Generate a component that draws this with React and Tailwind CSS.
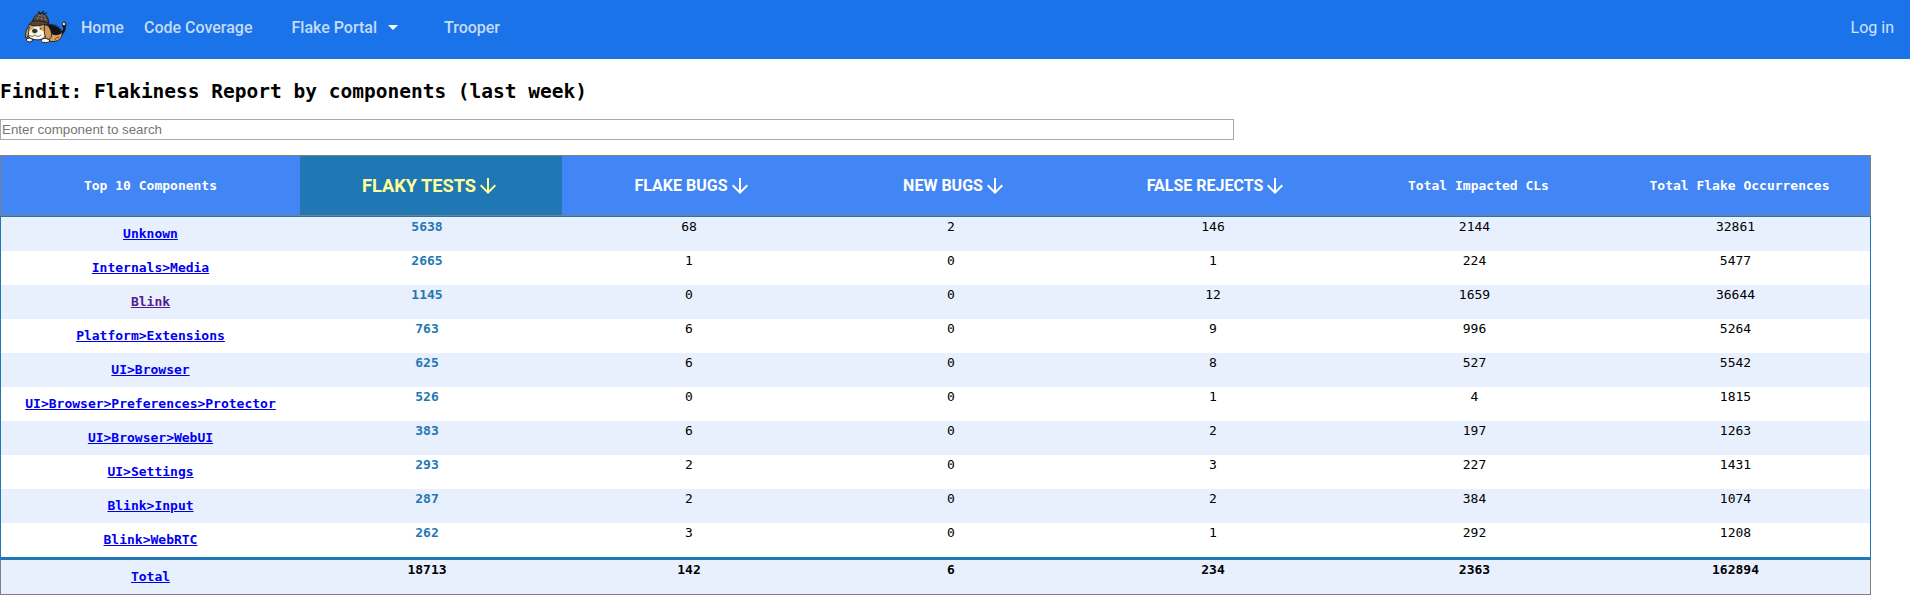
const rows = [
  ['Unknown', 5638, 68, 2, 146, 2144, 32861],
  ['Internals>Media', 2665, 1, 0, 1, 224, 5477],
  ['Blink', 1145, 0, 0, 12, 1659, 36644],
  ['Platform>Extensions', 763, 6, 0, 9, 996, 5264],
  ['UI>Browser', 625, 6, 0, 8, 527, 5542],
  ['UI>Browser>Preferences>Protector', 526, 0, 0, 1, 4, 1815],
  ['UI>Browser>WebUI', 383, 6, 0, 2, 197, 1263],
  ['UI>Settings', 293, 2, 0, 3, 227, 1431],
  ['Blink>Input', 287, 2, 0, 2, 384, 1074],
  ['Blink>WebRTC', 262, 3, 0, 1, 292, 1208],
];
const totals = [18713, 142, 6, 234, 2363, 162894];
const grid = 'grid grid-cols-[299px_262px_262px_262px_262px_261px_261px]';

function Dog() {
  return (
    <svg viewBox="0 0 50 40" className="h-10 w-[50px]" stroke="#1b1a1a" strokeWidth="0.9" strokeLinejoin="round" strokeLinecap="round">
      <path d="M39 24c3 0 4.600-1.500 4.600-4l-1.200-3c-.4-2 .8-3.400 2.200-3 1.600.6 1.600 3 .8 5-.2 5-2.400 8-6.400 8z" fill="#10151b" />
      <path d="M42.500 17c-.4-1.800.4-3 1.700-2.700 1.200.4 1.400 1.800 1 3.200z" fill="#f3eee2" strokeWidth="0.6" />
      <path d="M28 17c6-2 13 2 14 8 .5 5-3 8-8 8.500-5 .5-9-.5-11-2z" fill="#d9a15a" />
      <path d="M28 17c7-1 13 3 13.500 8-3 3-8 3-11 0z" fill="#10151b" stroke="none" />
      <path d="M35 32c.5-2 2-3 4-3" fill="none" strokeWidth="0.6" />
      <ellipse cx="25.500" cy="32.500" rx="4.200" ry="2.100" fill="#fff8e8" />
      <ellipse cx="9.500" cy="32" rx="3.200" ry="1.900" fill="#fff8e8" />
      <path d="M9 17c4-3 14-3 16.500 1 2 4 1.500 10-2.500 12.500-4 2.200-11 1.500-14-1.500-3-3.500-2.500-9 0-12z" fill="#fbf4e5" />
      <path d="M9.500 18c2-1.500 4.500-1 4.500.5s-2 3.500-4.500 3.500zM19 17.500c2-1 5 0 6 2v4c-3 0-6-3-6-6z" fill="#d9a15a" stroke="none" />
      <path d="M24.500 16.500c4 0 6.500 5 7 9 .4 3.500-1 6-3.500 5.800-4-.8-4-8.800-3.500-14.800z" fill="#cf975b" />
      <path d="M9 18.500c-2.500 2-4.200 7-3.300 11.500 2 .5 2.800-3.500 3-6z" fill="#cf975b" />
      <ellipse cx="14.700" cy="23" rx="2.400" ry="2" fill="#293546" strokeWidth="0.500" />
      <circle cx="20.500" cy="20.800" r="0.800" fill="#20201f" stroke="none" />
      <path d="M9.500 27.500c2 1.200 4 1 5.500-.6 1.500 1.800 4 2 6 .2" fill="none" strokeWidth="0.6" />
      <path d="M12.500 14c.5-5 4-8.500 8.500-8.800 4.500.3 7.500 4 8 10z" fill="#473d38" />
      <path d="M20 5.500l-1.500-1.800M21.500 5l2-1.500M23.500 6l3-1" fill="none" strokeWidth="1.300" />
      <path d="M9.500 16.500c.5-3 4-4 9-3.500s9 1.500 10.500 3c-3 1.200-5 .4-8 1.200-3.500 1-8 1.300-11.500-.7z" fill="#5b4334" />
      <path d="M15 9.500l12 2M17 7l8 1.500M17 12l2.500-5.500M21.500 12l.5-6M26 13l-1.500-6" stroke="#9a8c80" fill="none" strokeWidth="0.5" />
    </svg>
  );
}

function Arrow() {
  return (
    <svg viewBox="0 0 24 24" className="size-6 shrink-0" fill="currentColor">
      <path d="M20 12l-1.41-1.41L13 16.17V4h-2v12.17l-5.58-5.59L4 12l8 8 8-8z" />
    </svg>
  );
}

function SortHead({ label, active }) {
  return (
    <div className={active
      ? "flex items-center justify-center bg-[#1f78b4] font-['Roboto',sans-serif] text-[18.2px] font-bold text-[#ffff99]"
      : "flex items-center justify-center font-['Roboto',sans-serif] text-base font-bold text-white"}>
      <span>{label}</span>
      <Arrow />
    </div>
  );
}

const Link = ({ children }) => (
  <a href="#" className={children === 'Blink' ? 'font-bold text-[#551a8b] underline' : 'font-bold text-[#0000ee] underline'}>{children}</a>
);

export default function App() {
  return (
    <div className="h-[595px] overflow-hidden bg-white font-['DejaVu_Sans_Mono',monospace] text-[13px] text-black">
      <nav className="flex h-[59px] items-start bg-[#1a73e8] pl-5 pr-4 font-['Roboto',sans-serif] text-base text-white/75">
        <div className="mr-[11px] pt-2"><Dog /></div>
        <div className="flex h-[55px] flex-1 items-center font-medium">
          <a className="mr-5">Home</a>
          <a className="mr-[39px]">Code Coverage</a>
          <a className="flex items-center">Flake Portal
            <svg viewBox="0 0 10 5" className="ml-[11px] mr-[46px] h-[5px] w-[10px]"><path d="M0 0h10L5 5z" fill="#fff" /></svg>
          </a>
          <a>Trooper</a>
          <a className="ml-auto font-normal text-white/80">Log in</a>
        </div>
      </nav>
      <h1 className="mt-[21px] text-[19.5px] leading-6 font-bold">Findit: Flakiness Report by components (last week)</h1>
      <input placeholder="Enter component to search" className="mt-[15px] block h-[21px] w-[1234px] border border-[#a9a9a9] px-px font-['Liberation_Sans',sans-serif] text-[13.333px] placeholder:text-[#757575]" />
      <div className="mt-[15px] w-[1871px]">
        <div className={`${grid} h-[61px] border border-[#808080] bg-[#4285f4]`}>
          <div className="flex items-center justify-center font-bold text-white">Top 10 Components</div>
          <SortHead label="FLAKY TESTS" active />
          <SortHead label="FLAKE BUGS" />
          <SortHead label="NEW BUGS" />
          <SortHead label="FALSE REJECTS" />
          <div className="flex items-center justify-center font-bold text-white">Total Impacted CLs</div>
          <div className="flex items-center justify-center font-bold text-white">Total Flake Occurrences</div>
        </div>
        <div className="border-x border-t border-[#1f78b4]">
          {rows.map(([name, ...values]) => (
            <div key={name} className={`${grid} h-[34px] text-center leading-[15px] odd:bg-[#e8f0fe]`}>
              <div className="pt-[9px]"><Link>{name}</Link></div>
              {values.map((v, i) => <div key={i} className={i === 0 ? 'pt-[2px] pr-2 font-bold text-[#1f78b4]' : 'pt-[2px] pr-2'}>{v}</div>)}
            </div>
          ))}
        </div>
        <div className="h-[3px] bg-[#1f78b4]" />
        <div className={`${grid} h-[35px] border-x border-b border-[#808080] bg-[#e8f0fe] text-center leading-[15px]`}>
          <div className="pt-[9px]"><Link>Total</Link></div>
          {totals.map((v, i) => <div key={i} className="pt-[2px] pr-2 font-bold">{v}</div>)}
        </div>
      </div>
    </div>
  );
}
